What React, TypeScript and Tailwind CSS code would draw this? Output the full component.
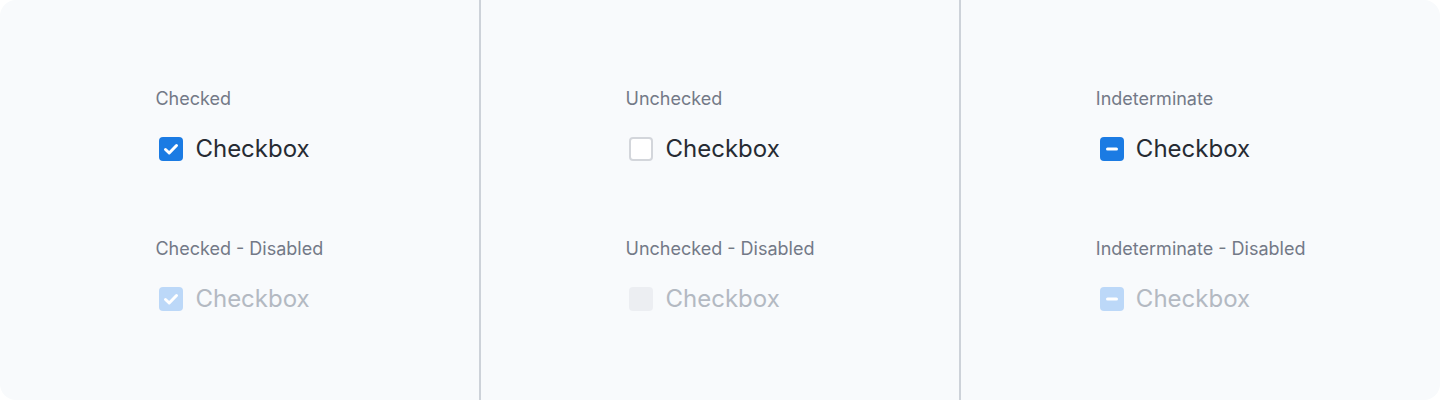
import { Fragment } from "react";

type State = "checked" | "unchecked" | "indeterminate";

const columns: { state: State; title: string }[] = [
  { state: "checked", title: "Checked" },
  { state: "unchecked", title: "Unchecked" },
  { state: "indeterminate", title: "Indeterminate" },
];

function Box({ state, disabled }: { state: State; disabled?: boolean }) {
  if (state === "unchecked") {
    return (
      <span
        className={
          disabled
            ? "ml-1 w-6 h-6 rounded-[4px] bg-[#eceef2]"
            : "ml-1 w-6 h-6 rounded-[4px] border-2 border-[#d3d6db] bg-white"
        }
      />
    );
  }
  return (
    <span
      className={`ml-1 w-6 h-6 rounded-[4px] flex items-center justify-center ${
        disabled ? "bg-[#bcd8f8]" : "bg-[#1b7be3]"
      }`}
    >
      <svg viewBox="0 0 24 24" className="w-6 h-6" fill="none" stroke="white" strokeWidth={3} strokeLinecap="round" strokeLinejoin="round">
        {state === "checked" ? (
          <polyline points="6.5,12.5 10.2,16 17.5,8.5" />
        ) : (
          <line x1="7.5" y1="12" x2="16.5" y2="12" />
        )}
      </svg>
    </span>
  );
}

function Item({ state, title, disabled }: { state: State; title: string; disabled?: boolean }) {
  return (
    <div className="flex flex-col gap-[25px]">
      <p className="text-[18px] leading-[22px] text-[#737987]">
        {title}
        {disabled ? " - Disabled" : ""}
      </p>
      <label className="flex items-center gap-3">
        <Box state={state} disabled={disabled} />
        <span className={`text-[24px] leading-7 ${disabled ? "text-[#b3b9c2]" : "text-[#262b33]"}`}>
          Checkbox
        </span>
      </label>
    </div>
  );
}

export default function App() {
  return (
    <div
      className="w-[1440px] h-[400px] bg-white"
      style={{ fontFamily: "Inter, 'Noto Sans', sans-serif" }}
    >
      <div className="h-full rounded-2xl bg-[#f8fafc] grid grid-cols-[1fr_2px_1fr_2px_1fr]">
        {columns.map((col, i) => (
          <Fragment key={col.state}>
            {i > 0 && <div className="bg-[#cdd2d9]" />}
            <div className="flex items-center justify-center">
              <div className="flex flex-col gap-[75px]">
                <Item state={col.state} title={col.title} />
                <Item state={col.state} title={col.title} disabled />
              </div>
            </div>
          </Fragment>
        ))}
      </div>
    </div>
  );
}
